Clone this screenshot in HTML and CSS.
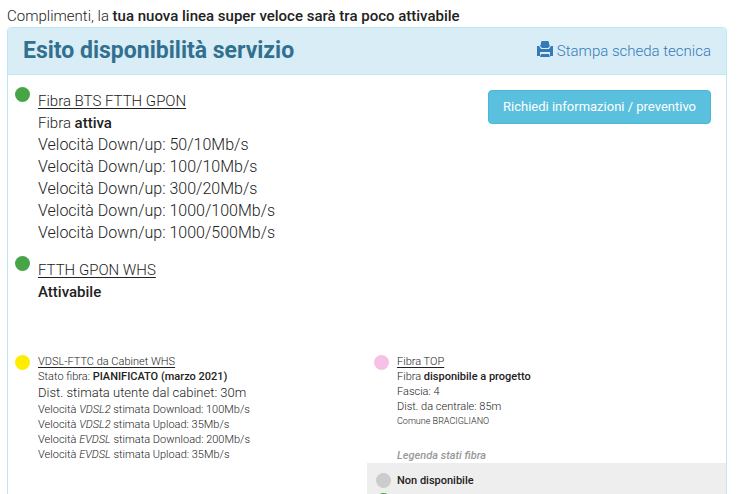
FILE: index.html
```html
<!DOCTYPE html>
<html lang="it">
<head>
  <meta charset="utf-8">
  <title>Esito disponibilità servizio</title>
  <link rel="stylesheet" href="styles.css">
</head>
<body>
  <p class="intro">Complimenti, la <b>tua nuova linea super veloce sarà tra poco attivabile</b></p>

  <div class="panel">
    <div class="panel-heading">
      <h1>Esito disponibilità servizio</h1>
      <a class="print" href="#"><svg class="icon" viewBox="0 0 16 16" aria-hidden="true"><path d="M5 0h6l1 1v2l1 2-2 2H5L3 5l1-2V1zM0 5h2l2 3h8l2-3h2v10h-3v-4H3v4H0zM4 13h8l1 3H3z"/></svg> Stampa scheda tecnica</a>
    </div>

    <div class="panel-body">
      <div class="top">
        <div class="services">
          <div class="service">
            <span class="dot green"></span>
            <div class="text">
              <p><u>Fibra BTS FTTH GPON</u></p>
              <p>Fibra <b>attiva</b></p>
              <p class="speed">Velocità Down/up: 50/10Mb/s</p>
              <p class="speed">Velocità Down/up: 100/10Mb/s</p>
              <p class="speed">Velocità Down/up: 300/20Mb/s</p>
              <p class="speed">Velocità Down/up: 1000/100Mb/s</p>
              <p class="speed">Velocità Down/up: 1000/500Mb/s</p>
            </div>
          </div>
          <div class="service">
            <span class="dot green"></span>
            <div class="text">
              <p><u>FTTH GPON WHS</u></p>
              <p><b>Attivabile</b></p>
            </div>
          </div>
        </div>
        <button type="button" class="btn">Richiedi informazioni / preventivo</button>
      </div>

      <div class="columns">
        <div class="service small">
          <span class="dot yellow"></span>
          <div class="text">
            <p><u>VDSL-FTTC da Cabinet WHS</u></p>
            <p>Stato fibra: <b>PIANIFICATO (marzo 2021)</b></p>
            <p class="distance">Dist. stimata utente dal cabinet: 30m</p>
            <p>Velocità <i>VDSL2</i> stimata Download: 100Mb/s</p>
            <p>Velocità <i>VDSL2</i> stimata Upload: 35Mb/s</p>
            <p>Velocità <i>EVDSL</i> stimata Download: 200Mb/s</p>
            <p>Velocità <i>EVDSL</i> stimata Upload: 35Mb/s</p>
          </div>
        </div>

        <div>
          <div class="service small">
            <span class="dot pink"></span>
            <div class="text">
              <p><u>Fibra TOP</u></p>
              <p>Fibra <b>disponibile a progetto</b></p>
              <p>Fascia: 4</p>
              <p>Dist. da centrale: 85m</p>
              <p class="town">Comune BRACIGLIANO</p>
            </div>
          </div>
          <h2>Legenda stati fibra</h2>
          <ul class="legend">
            <li><span class="dot gray"></span><b>Non disponibile</b></li>
            <li><span class="dot green"></span></li>
          </ul>
        </div>
      </div>
    </div>
  </div>
</body>
</html>
```

FILE: styles.css
```css
* {
  box-sizing: border-box;
}

body {
  margin: 0;
  padding: 6px 23px 0 7px;
  height: 100vh;
  overflow: hidden;
  font-family: Roboto, sans-serif;
  font-size: 15px;
  font-weight: 300;
  line-height: 22px;
  color: #222;
  background-color: #fff;
}

p,
h1,
h2 {
  margin: 0;
}

b {
  font-weight: 500;
}

u {
  text-underline-offset: 2px;
}

.intro {
  line-height: 21px;
}

.panel {
  border: 1px solid #bce8f1;
  border-radius: 4px;
}

.panel-heading {
  display: flex;
  justify-content: space-between;
  align-items: center;
  padding: 10px 15px;
  border-bottom: 1px solid #bce8f1;
  border-radius: 3px 3px 0 0;
  background-color: #d9edf7;
}

h1 {
  font-size: 23px;
  font-weight: 700;
  line-height: 26px;
  color: #31708f;
}

.print {
  color: #337ab7;
  text-decoration: none;
}

.icon {
  width: 16px;
  height: 16px;
  vertical-align: -1px;
  fill: #337ab7;
}

.top {
  display: flex;
  justify-content: space-between;
  align-items: flex-start;
  padding: 15px 15px 0 0;
}

.service {
  display: flex;
  gap: 8px;
  margin-bottom: 15px;
  padding-left: 7px;
}

.services .dot {
  margin-top: -3px;
}

.speed {
  font-size: 16px;
}

.dot {
  flex: none;
  width: 15px;
  height: 15px;
  border-radius: 50%;
}

.green {
  background-color: #47a447;
}

.yellow {
  background-color: #ffed00;
}

.pink {
  background-color: #f7c1e6;
}

.gray {
  background-color: #ccc;
}

.btn {
  padding: 6px 14px;
  border: 1px solid #46b8da;
  border-radius: 4px;
  font-family: inherit;
  font-size: 13px;
  font-weight: 400;
  line-height: 20px;
  color: #fff;
  background-color: #5bc0de;
  cursor: pointer;
}

.columns {
  display: grid;
  grid-template-columns: 1fr 1fr;
  margin-top: 36px;
}

.small {
  font-size: 11px;
  line-height: 15px;
  margin-bottom: 20px;
}

.small .dot {
  margin-top: 1px;
}

.distance {
  font-size: 13px;
  line-height: 18px;
}

.town {
  font-size: 9px;
}

h2 {
  padding-left: 30px;
  font-size: 11px;
  font-weight: 500;
  font-style: italic;
  line-height: 14px;
  color: #999;
}

.legend {
  margin: 0;
  padding: 10px 9px;
  list-style: none;
  font-size: 11px;
  line-height: 16px;
  background-color: #eee;
}

.legend li {
  display: flex;
  gap: 6px;
  min-height: 15px;
  margin-bottom: 4px;
}
```
